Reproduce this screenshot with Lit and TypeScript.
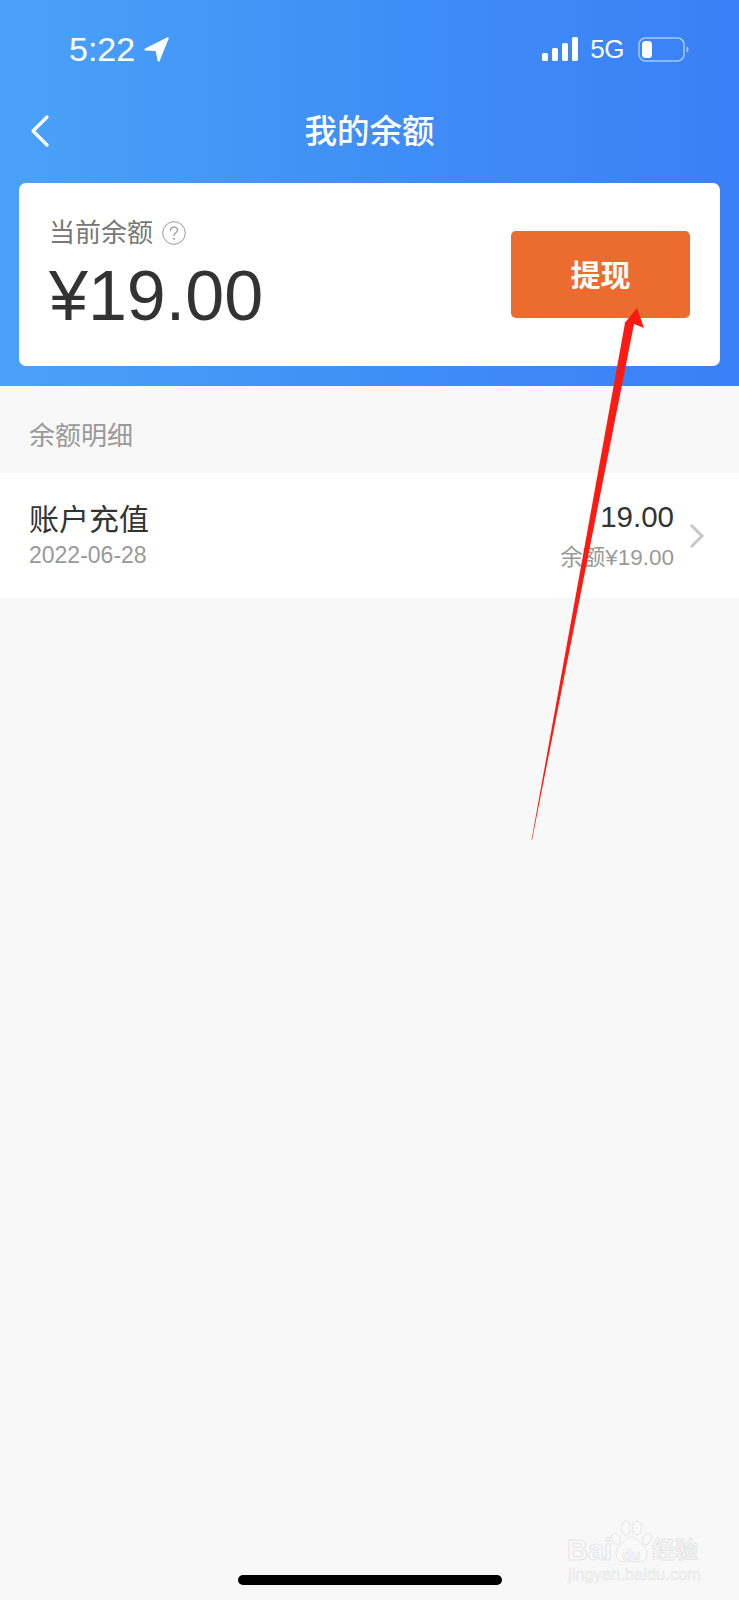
import { LitElement, html, css } from "lit";
import { customElement } from "lit/decorators.js";

@customElement("app-root")
export class AppRoot extends LitElement {
  static styles = css`
    :host {
      display: block;
      position: relative;
      width: 739px;
      height: 1600px;
      overflow: hidden;
      background: #f8f8f8;
      font-family: "Liberation Sans", "Noto Sans CJK SC", sans-serif;
      color: #333;
    }
    .header {
      height: 386px;
      background: linear-gradient(90deg, #4aa2f8 0%, #3f8df6 55%, #3a80f6 100%);
      color: #fff;
    }
    .status {
      box-sizing: border-box;
      height: 96px;
      display: flex;
      align-items: center;
      padding: 2px 50px 0 69px;
    }
    .time {
      display: flex;
      align-items: center;
      gap: 9px;
      font-size: 34px;
      line-height: 1;
    }
    .status-right {
      margin-left: auto;
      display: flex;
      align-items: center;
    }
    .net {
      font-size: 26px;
      letter-spacing: -0.5px;
      line-height: 1;
      margin: 0 14px 0 11px;
    }
    .nav {
      height: 70px;
      display: flex;
      align-items: center;
      justify-content: center;
      position: relative;
    }
    .back {
      position: absolute;
      left: 29px;
      top: 18px;
    }
    .title {
      font-size: 32.5px;
      font-weight: 500;
      margin-bottom: 6px;
    }
    .card {
      margin: 17px 19px 0;
      height: 183px;
      background: #fff;
      border-radius: 7px;
      display: flex;
      align-items: center;
      justify-content: space-between;
      padding: 0 30px;
      color: #333;
    }
    .info {
      padding-top: 3px;
    }
    .label {
      display: flex;
      align-items: center;
      gap: 9px;
      font-size: 26px;
      line-height: 34px;
      color: #777;
    }
    .balance {
      font-size: 70px;
      line-height: 80px;
      margin-top: 6px;
    }
    .btn {
      box-sizing: border-box;
      width: 179px;
      height: 87px;
      padding-bottom: 4px;
      background: #ec6c30;
      border-radius: 5px;
      color: #fff;
      font-size: 30px;
      font-weight: 700;
      display: flex;
      align-items: center;
      justify-content: center;
    }
    .section {
      box-sizing: border-box;
      height: 87px;
      display: flex;
      align-items: center;
      padding: 8px 0 0 29px;
      font-size: 26px;
      color: #999;
    }
    .row {
      height: 125px;
      background: #fff;
      display: flex;
      align-items: center;
      padding: 0 34px 0 29px;
    }
    .row-title {
      font-size: 30px;
      line-height: 38px;
    }
    .row-date {
      font-size: 23px;
      line-height: 30px;
      color: #999;
      margin-top: 1px;
    }
    .row-right {
      margin-left: auto;
      text-align: right;
    }
    .row-amount {
      font-size: 29.5px;
      line-height: 38px;
    }
    .row-rest {
      font-size: 22.5px;
      line-height: 30px;
      color: #999;
      margin-top: 7px;
    }
    .chevron {
      margin-left: 15px;
    }
    .home {
      position: absolute;
      left: 238px;
      top: 1575px;
      width: 264px;
      height: 10px;
      border-radius: 5px;
      background: #000;
    }
    .arrow {
      position: absolute;
      left: 0;
      top: 0;
    }
    .mark {
      position: absolute;
      left: 567px;
      top: 1520px;
      width: 134px;
      height: 66px;
      color: #f9f9f9;
      -webkit-text-stroke: 1px #e6e6e6;
    }
    .mark svg {
      position: absolute;
      left: 44px;
      top: 0;
    }
    .mark span {
      position: absolute;
      white-space: nowrap;
      line-height: 1;
    }
    .mark .bai {
      left: 0;
      top: 16px;
      font-size: 29px;
      font-weight: 700;
    }
    .mark .du {
      left: 55px;
      top: 27px;
      font-size: 15px;
      font-weight: 700;
      -webkit-text-stroke: 0.7px #e6e6e6;
    }
    .mark .jy {
      left: 85px;
      top: 19px;
      font-size: 23px;
      font-weight: 700;
    }
    .mark .url {
      left: 1px;
      top: 46px;
      font-size: 16.5px;
      -webkit-text-stroke: 0.6px #e6e6e6;
    }
  `;

  render() {
    return html`
      <div class="header">
        <div class="status">
          <div class="time">
            5:22
            <svg width="25" height="25" viewBox="0 0 25 25">
              <path d="M1 11.500 23.500.3c.9-.4 1.500.3 1.200 1.100L15.500 24.200c-.4.900-1.500.800-1.700-.1L11.500 14 1.300 13.500c-1-.1-1.200-1.500-.3-2z" fill="#fff" />
            </svg>
          </div>
          <div class="status-right">
            <svg width="37" height="25" viewBox="0 0 37 25" fill="#fff">
              <rect x="0" y="16" width="6" height="8" rx="1.500" />
              <rect x="10" y="11" width="6" height="13" rx="1.500" />
              <rect x="20" y="6" width="6" height="18" rx="1.500" />
              <rect x="30" y="0" width="6" height="24" rx="1.500" />
            </svg>
            <span class="net">5G</span>
            <svg width="51" height="25" viewBox="0 0 51 25">
              <rect x="1" y="1" width="45" height="23" rx="6.500" fill="none" stroke="#a6c8fb" stroke-width="1.500" />
              <rect x="4" y="4" width="10" height="17" rx="3.500" fill="#fff" />
              <path d="M48.500 9.500c1.200.5 2 1.600 2 3s-.8 2.500-2 3z" fill="#a6c8fb" />
            </svg>
          </div>
        </div>
        <div class="nav">
          <svg class="back" width="22" height="34" viewBox="0 0 22 34" fill="none">
            <path d="M18 3 4 17l14 14" stroke="#fff" stroke-width="3.200" stroke-linecap="round" stroke-linejoin="round" />
          </svg>
          <div class="title">我的余额</div>
        </div>
        <div class="card">
          <div class="info">
            <div class="label">
              当前余额
              <svg width="24" height="24" viewBox="0 0 24 24" fill="none">
                <circle cx="12" cy="12" r="11.300" stroke="#999" stroke-width="1" />
                <path d="M8.500 9.500c0-2 1.600-3.300 3.500-3.300s3.500 1.200 3.500 3c0 2.600-3.500 2.600-3.500 5.300" stroke="#999" stroke-width="1.300" stroke-linecap="round" />
                <circle cx="12" cy="17.800" r="1" fill="#999" />
              </svg>
            </div>
            <div class="balance">¥19.00</div>
          </div>
          <div class="btn">提现</div>
        </div>
      </div>
      <div class="section">余额明细</div>
      <div class="row">
        <div>
          <div class="row-title">账户充值</div>
          <div class="row-date">2022-06-28</div>
        </div>
        <div class="row-right">
          <div class="row-amount">19.00</div>
          <div class="row-rest">余额¥19.00</div>
        </div>
        <svg class="chevron" width="16" height="26" viewBox="0 0 16 26" fill="none">
          <path d="M2 2l11 11L2 24" stroke="#c8c8c8" stroke-width="3" />
        </svg>
      </div>
      <svg class="arrow" width="739" height="1600" viewBox="0 0 739 1600">
        <polygon points="637,308 644,328 634,324 532,840 531.500,840 625,323 623,325" fill="#fb1b12" />
      </svg>
      <div class="home"></div>
      <div class="mark">
        <svg width="42" height="43" viewBox="0 0 42 43" fill="#f9f9f9" stroke="#e6e6e6" stroke-width="1">
          <ellipse cx="5" cy="19" rx="4" ry="6" transform="rotate(-25 5 19)" />
          <ellipse cx="15" cy="8" rx="4.500" ry="7" />
          <ellipse cx="26" cy="8" rx="4.500" ry="7" />
          <ellipse cx="36" cy="19" rx="4" ry="6" transform="rotate(25 36 19)" />
          <path d="M20.500 17c-5 0-7 5-13 10-4 4-4 15 6 15 3 0 5-1 7-1s4 1 7 1c10 0 10-11 6-15-6-5-8-10-13-10z" />
        </svg>
        <span class="bai">Bai</span>
        <span class="du">du</span>
        <span class="jy">经验</span>
        <span class="url">jingyan.baidu.com</span>
      </div>
    `;
  }
}
